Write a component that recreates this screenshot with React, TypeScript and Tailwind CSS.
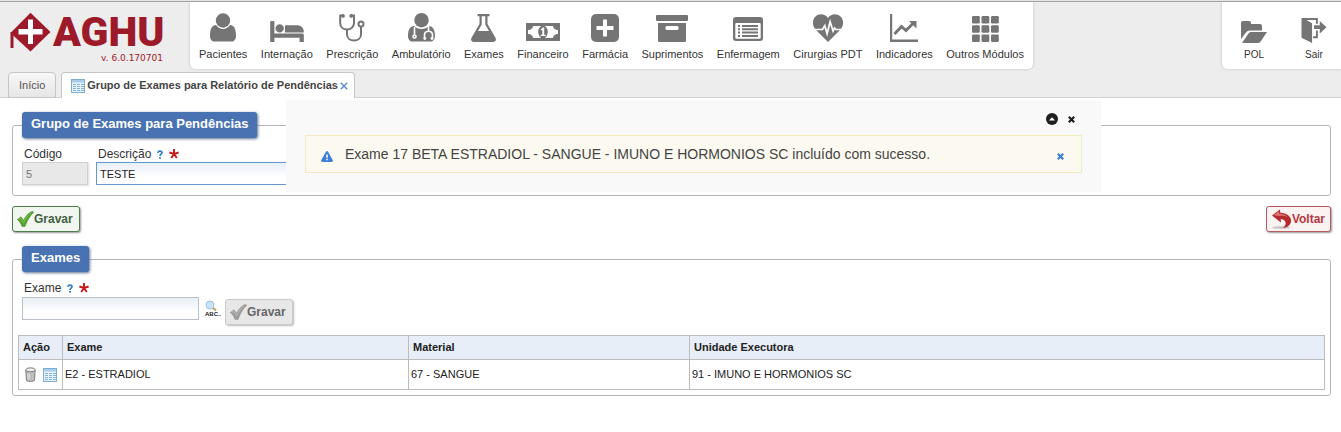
import type { ReactNode } from "react";

const G = "#757575";

function Svg({ w, h, box, children }: { w: number; h: number; box: string; children: ReactNode }) {
  return (
    <svg width={w} height={h} viewBox={box} fill={G} aria-hidden="true">
      {children}
    </svg>
  );
}

const UserIcon = () => (
  <Svg w={26} h={29} box="0 0 26 29">
    <circle cx="13" cy="7.5" r="7.2" />
    <path d="M6 12c2 2.700 4.500 3.900 7 3.900s5-1.200 7-3.900c4.700.2 6 5 6 11 0 3.500-2 5.500-4.500 5.500h-17C2 28.500 0 26.500 0 23c0-6 1.300-10.800 6-11z" />
  </Svg>
);
const BedIcon = () => (
  <Svg w={34} h={21} box="0 256 2048 1280">
    <path d="M256 1024h1728q26 0 45 19t19 45v448h-256v-256h-1536v256h-256v-1216q0-26 19-45t45-19h128q26 0 45 19t19 45v704zm576-320q0-106-75-181t-181-75-181 75-75 181 75 181 181 75 181-75 75-181zm1216 256v-64q0-159-112.5-271.5t-271.5-112.5h-704q-26 0-45 19t-19 45v384h1152z" />
  </Svg>
);
const StethoscopeIcon = () => (
  <Svg w={26} h={28} box="0 0 26 28">
    <g fill="none" stroke={G} strokeWidth="2" strokeLinecap="round">
      <path d="M4 1.500H1.200V9c0 4 3 6.500 6.800 6.500S15 13 15 9V1.500h-3M8 16v4.500c0 8 14 8 14 0V13" />
      <circle cx="22" cy="10" r="2.500" />
    </g>
    <circle cx="4" cy="1.900" r="1.900" />
    <circle cx="12.200" cy="1.900" r="1.900" />
  </Svg>
);
const DoctorIcon = () => (
  <Svg w={27} h={29} box="0 0 27 29">
    <circle cx="13.500" cy="7.200" r="7.200" />
    <path d="M6 13c4 4 11 4 15 0 4.500.5 6 5 6 10 0 3.500-2 5.500-4.500 5.500h-18C2 28.500 0 26.500 0 23c0-5 1.500-9.500 6-10z" />
    <g fill="none" stroke="#fff" strokeWidth="1.600">
      <path d="M6.500 14v7.500M16.500 26v-4c0-5 8-5 8 0v4M20.500 18v-5" />
      <circle cx="6.500" cy="23.500" r="1.500" />
    </g>
    <circle cx="16.800" cy="25.500" r="1.400" fill="#fff" />
    <circle cx="24" cy="25.500" r="1.400" fill="#fff" />
  </Svg>
);
const FlaskIcon = () => (
  <Svg w={25} h={28} box="0 0 25 28">
    <path fillRule="evenodd" d="M6.500 0h12v2.200h-2V10l7.800 13.500c1.500 2.500.2 4.500-2.300 4.500H3C.5 28-.8 26 .7 23.500L8.500 10V2.200h-2zM10.700 2.200v8.400L7 17h11l-3.700-6.400V2.200z" />
  </Svg>
);
const MoneyIcon = () => (
  <Svg w={34} h={19} box="0 0 34 19">
    <path d="M0 0h34v18H0z" />
    <path fill="#fff" d="M7 3h20c0 2 2 4 5 4v4c-3 0-5 2-5 4H7c0-2-2-4-5-4V7c3 0 5-2 5-4z" />
    <ellipse cx="17" cy="9" rx="4.800" ry="6.500" />
    <path fill="#fff" d="M14.700 6.500 17 4.500h1.200v7.300h1.500V13h-5v-1.200h1.600V6.700l-.8.700z" />
  </Svg>
);
const PlusIcon = () => (
  <Svg w={28} h={28} box="0 0 28 28">
    <rect width="28" height="28" rx="5" />
    <path fill="#fff" d="M12 5.500h4V12h6.500v4H16v6.500h-4V16H5.500v-4H12z" />
  </Svg>
);
const ArchiveIcon = () => (
  <Svg w={32} h={27} box="0 0 32 27">
    <rect width="32" height="6" rx="1" />
    <path d="M2 8h28v17.500c0 1-.5 1.500-1.500 1.500h-25C2.500 27 2 26.500 2 25.500z" />
    <rect x="9.500" y="11" width="13" height="4" rx="1.500" fill="#fff" />
  </Svg>
);
const ListIcon = () => (
  <Svg w={30} h={25} box="0 0 30 25">
    <rect width="30" height="24" rx="3" />
    <rect x="2.300" y="6" width="25.400" height="15.700" rx="1" fill="#fff" />
    <path d="M5 8h2v2H5zm4 0h16v2H9zM5 11.300h2v2H5zm4 0h16v2H9zM5 14.600h2v2H5zm4 0h16v2H9zM5 17.900h2v2H5zm4 0h16v2H9z" />
  </Svg>
);
const HeartIcon = () => (
  <Svg w={30} h={28} box="0 0 30 28">
    <path d="M15 28 2.500 15.500C-1 11.500-.8 5.500 2.500 2.500 6-.8 12-.5 15 4c3-4.500 9-4.800 12.500-1.500 3.300 3 3.500 9 0 13z" />
    <path d="M1 15.500h8.500l2.300-3.800 2.300 8 3-12 3 9.500 1.400-3.200 1.300 1.500H29" fill="none" stroke="#fff" strokeWidth="1.700" />
  </Svg>
);
const ChartIcon = () => (
  <Svg w={28} h={28} box="0 0 28 28">
    <path d="M0 0h2.200v25.600H28V28H0z" />
    <path d="m4.500 20 7-7.500 4.500 4L23 9.500" fill="none" stroke={G} strokeWidth="3" />
    <path d="M19 7h7.500v7.500z" />
  </Svg>
);
const GridIcon = () => (
  <Svg w={27} h={26} box="0 0 27 26">
    {[0, 9.500, 19].map((x) =>
      [0, 9.200, 18.400].map((y) => <rect key={`${x}-${y}`} x={x} y={y} width="7.800" height="7.500" rx="1.200" />),
    )}
  </Svg>
);
const FolderIcon = () => (
  <Svg w={26} h={22} box="0 0 26 22">
    <path d="M0 18V2C0 .7.7 0 2 0h6c1.300 0 2 .7 2 2v1h9c1.300 0 2 .7 2 2v4.500H9c-1.700 0-3 .7-4 2z" />
    <path d="M1 22 7.500 12.500c.7-1 1.500-1.500 2.800-1.500H26l-6 9c-.8 1.300-1.800 2-3 2z" />
  </Svg>
);
const ExitIcon = () => (
  <Svg w={26} h={25} box="0 0 26 26">
    <path d="M0 0h17v6h-2V2H5l6 3.500V26L0 20.500z" />
    <path d="M13 7.500h6V3l7 6.500L19 16v-4.500h-6zM15 13h2v8h-5v-2h3z" />
  </Svg>
);

const modules: { name: string; icon: ReactNode }[] = [
  { name: "Pacientes", icon: <UserIcon /> },
  { name: "Internação", icon: <BedIcon /> },
  { name: "Prescrição", icon: <StethoscopeIcon /> },
  { name: "Ambulatório", icon: <DoctorIcon /> },
  { name: "Exames", icon: <FlaskIcon /> },
  { name: "Financeiro", icon: <MoneyIcon /> },
  { name: "Farmácia", icon: <PlusIcon /> },
  { name: "Suprimentos", icon: <ArchiveIcon /> },
  { name: "Enfermagem", icon: <ListIcon /> },
  { name: "Cirurgias PDT", icon: <HeartIcon /> },
  { name: "Indicadores", icon: <ChartIcon /> },
  { name: "Outros Módulos", icon: <GridIcon /> },
];

function SheetIcon() {
  return (
    <svg width="14" height="14" viewBox="0 0 14 14" aria-hidden="true">
      <rect x=".5" y=".5" width="13" height="13" fill="#e6f3fc" stroke="#7fadd0" />
      <path d="M1 1h12v2.500H1z" fill="#a5cdec" />
      <path d="M2 5.500h3M6 5.500h3M10 5.500h3M2 7.500h3M6 7.500h3M10 7.500h3M2 9.500h3M6 9.500h3M10 9.500h3M2 11.500h3M6 11.500h3M10 11.500h3" stroke="#86b4d6" />
    </svg>
  );
}

function CheckIcon({ muted = false }: { muted?: boolean }) {
  return (
    <svg width="17" height="16" viewBox="0 0 17 16" aria-hidden="true">
      <path
        d="M.3 8.500 4 5.800l2.500 3.500C8.800 5 11.800 1.500 15.500.3l1.200.9C12.800 5 10 10 8 15.500H5C4 12.500 2.500 10.300.3 8.500z"
        fill={muted ? "#9c9c9c" : "#55a22f"}
        stroke={muted ? "#8c8c8c" : "#3f8428"}
        strokeWidth=".5"
      />
      <path d="m2 8.300 1.500-1 3 4.200C9 7 11 4 14 2" fill="none" stroke={muted ? "#bcbcbc" : "#86c554"} strokeWidth="1" />
    </svg>
  );
}

function Marks() {
  return (
    <>
      <svg width="6" height="9" viewBox="0 0 6 9" aria-hidden="true">
        <path d="M.8 2.800C1 .6 5 .5 5 2.700 5 4.200 3 4.200 3 6" fill="none" stroke="#2f7fc4" strokeWidth="1.700" />
        <path d="M2.100 7h1.800v1.800H2.100z" fill="#2f7fc4" />
      </svg>
      <svg width="10" height="10" viewBox="0 0 10 10" aria-hidden="true">
        <path d="M5 0v5L.4 3.500M5 5 2.200 9M5 5l2.800 4M5 5l4.600-1.500" fill="none" stroke="#c51b1b" strokeWidth="1.900" />
      </svg>
    </>
  );
}

function Cross({ className }: { className: string }) {
  return (
    <svg width="7" height="7" viewBox="0 0 7 7" className={className} aria-hidden="true">
      <path d="m.8.800 5.400 5.400M6.200.8.800 6.200" stroke="currentColor" strokeWidth="2.200" />
    </svg>
  );
}

function Legend({ children }: { children: ReactNode }) {
  return (
    <legend className="ml-[4px] flex h-[26px] items-center rounded-[3px] bg-[#4872b2] px-[9px] pb-[2px] text-[13px] font-bold text-white shadow-[1px_1px_3px_#5d718f]">
      {children}
    </legend>
  );
}

const columns = ["Ação", "Exame", "Material", "Unidade Executora"];

function ModuleLink({ name, icon }: { name: string; icon: ReactNode }) {
  return (
    <a href="#" className="flex flex-col items-center gap-1">
      <span className="flex h-[29px] items-end">{icon}</span>
      <span className="leading-4 whitespace-nowrap">{name}</span>
    </a>
  );
}

export default function App() {
  return (
    <div className="relative bg-white font-['Liberation_Sans',Arial,sans-serif] text-[#333]">
      <header className="border-b border-[#d2d2d2] bg-[#ededed]">
        <div className="h-[2px] border-b border-[#a3a3a3] bg-[#e4e4e4]" />
        <div className="flex items-start">
          <div className="flex w-[190px] shrink-0 flex-col pt-[10px] pl-[10px]">
            <div className="flex items-center gap-[2px] text-[#9d1a2b]">
              <svg width="41" height="40" viewBox="0 0 41 40" className="shrink-0" aria-hidden="true">
                <path d="M20.500.8 40.500 20l-20 19.500L.5 21z" fill="#9d1a2b" />
                <path d="M2 20v16" stroke="#9d1a2b" strokeWidth="3" />
                <path d="M18 7.500h5V17h9.500v5.500H23V32h-5v-9.500H8.500V17H18z" fill="#fff" />
              </svg>
              <span className="font-['Roboto',sans-serif] text-[41px] leading-10 font-black">AGHU</span>
            </div>
            <span className="self-end pr-[27px] font-['DejaVu_Sans',sans-serif] text-[9px] leading-3 text-[#9d1a2b]">v. 6.0.170701</span>
          </div>
          <nav className="flex h-[67px] w-[843px] justify-between rounded-b-[5px] bg-white px-[9px] pt-[11px] text-[11px] shadow-[0_0_3px_#bdbdbd] [clip-path:inset(0_-4px_-4px_-4px)]">
            {modules.map((m) => (
              <ModuleLink key={m.name} name={m.name} icon={m.icon} />
            ))}
          </nav>
          <nav className="ml-auto flex h-[67px] gap-[34px] rounded-bl-[5px] bg-white pt-[12px] pr-[14px] pl-[19px] text-[10px] shadow-[0_0_3px_#bdbdbd] [clip-path:inset(0_0_-4px_-4px)]">
            <ModuleLink name="POL" icon={<FolderIcon />} />
            <ModuleLink name="Sair" icon={<ExitIcon />} />
          </nav>
        </div>
        <div className="-mb-px flex h-[29px] items-end gap-[5px] pl-[8px]">
          <a href="#" className="flex h-[26px] items-center rounded-t-[4px] border border-[#c6c6c6] bg-linear-to-b from-[#f8f8f8] to-[#e6e6e6] px-[10px] text-[11px] text-[#555]">
            Início
          </a>
          <div className="flex h-[26px] items-center rounded-t-[4px] border border-b-0 border-[#c6c6c6] bg-white pr-[6px] pl-[9px] text-[11px] font-bold text-[#444]">
            <SheetIcon />
            <a href="#" className="ml-[2px]">Grupo de Exames para Relatório de Pendências</a>
            <button type="button" aria-label="Fechar aba" className="ml-[2px]">
              <svg width="8" height="8" viewBox="0 0 8 8" aria-hidden="true">
                <path d="m.8.800 6.400 6.400M7.200.8.800 7.200" stroke="#5e8fc9" strokeWidth="1.500" />
              </svg>
            </button>
          </div>
        </div>
      </header>

      <main className="px-[10px] pt-[14px] pl-[12px]">
        <fieldset className="rounded-[3px] border border-[#b4b7ba] px-[5px] pb-[10px]">
          <Legend>Grupo de Exames para Pendências</Legend>
          <div className="flex gap-[8px] pt-2 pl-[4px]">
            <div className="flex w-[66px] flex-col">
              <label htmlFor="codigo" className="pl-[2px] text-[12px] leading-4">Código</label>
              <input id="codigo" disabled defaultValue="5" className="h-[23px] border border-[#d0d0d0] bg-[#e8e8e8] px-[3px] text-[11px] text-[#777] shadow-[1px_1px_2px_#ddd]" />
            </div>
            <div className="flex w-[420px] flex-col">
              <div className="flex items-center gap-[6px] pl-[2px]">
                <label htmlFor="descricao" className="text-[12px] leading-4">Descrição</label>
                <Marks />
              </div>
              <input id="descricao" defaultValue="TESTE" className="h-[23px] border border-[#6795cd] bg-linear-to-b from-[#e9eff7] to-white to-70% px-[3px] text-[11px] text-[#222]" />
            </div>
          </div>
        </fieldset>

        <div className="flex justify-between pt-[10px]">
          <button type="button" className="flex h-[26px] items-center rounded-[3px] border border-[#4d7c49] bg-[#f1f6f0] pr-[6px] pl-[4px] text-[12px] font-bold text-[#41603f] shadow-[1px_1px_2px_#999]">
            <CheckIcon />
            Gravar
          </button>
          <button type="button" className="flex h-[26px] items-center rounded-[3px] border border-[#b85a60] bg-[#fbf2f2] pr-[5px] pl-[4px] text-[12px] font-bold text-[#b5383e] shadow-[1px_1px_2px_#999]">
            <svg width="21" height="20" viewBox="0 0 21 20" aria-hidden="true">
              <ellipse cx="10" cy="18.500" rx="9" ry="1.300" fill="#c9c4c4" />
              <path d="M1 6.500 9 .5l.3 3.300c8 .2 12.500 5.500 10.200 10.700-1.300 2.700-4.500 4.300-8 4.500 4.500-2.700 4.500-8.500-1.800-9l.3 3.500z" fill="#b52a2c" />
              <path d="m2.500 6.300 5.500-4 .3 2.500c4 0 7 1.200 8.700 3.500-2.500-1.300-5-1.600-8.500-1.400z" fill="#de7471" />
            </svg>
            Voltar
          </button>
        </div>

        <fieldset className="mt-[14px] rounded-[3px] border border-[#b4b7ba] px-[5px] pb-[5px]">
          <Legend>Exames</Legend>
          <div className="pt-2 pl-[4px]">
            <div className="flex items-center gap-[6px] pl-[2px]">
              <label htmlFor="exame" className="text-[12px] leading-4">Exame</label>
              <Marks />
            </div>
            <div className="flex items-start">
              <input id="exame" className="mt-px h-[23px] w-[177px] border border-[#b9bfc8] bg-linear-to-b from-[#e9eff7] to-white to-70% px-[3px] text-[11px]" />
              <button type="button" aria-label="Pesquisar exame" className="mt-1 ml-[6px]">
                <svg width="16" height="17" viewBox="0 0 16 17" aria-hidden="true">
                  <circle cx="5" cy="5" r="4" fill="#c9e3f7" stroke="#9fc3de" />
                  <path d="m8 8 3 2.500" stroke="#c79a5f" strokeWidth="2" />
                  <text x="0" y="16" fontSize="6" fontWeight="bold" fill="#222" fontFamily="Liberation Sans, sans-serif">ABC..</text>
                </svg>
              </button>
              <button type="button" disabled className="mt-[3px] ml-[4px] flex h-[26px] items-center rounded-[3px] border border-[#cbcbcb] bg-[#e7e7e7] pr-[6px] pl-[4px] text-[12px] font-bold text-[#666] shadow-[1px_1px_2px_#bbb]">
                <CheckIcon muted />
                Gravar
              </button>
            </div>
          </div>
          <table className="mt-[10px] w-full table-fixed border-collapse text-left text-[11px] text-[#222]">
            <colgroup>
              <col className="w-[44px]" />
              <col className="w-[346px]" />
              <col className="w-[281px]" />
              <col />
            </colgroup>
            <thead>
              <tr className="h-[24px] bg-[#e7eef7]">
                {columns.map((c) => (
                  <th key={c} scope="col" className="border border-[#bcbcbc] px-[4px] font-bold">{c}</th>
                ))}
              </tr>
            </thead>
            <tbody>
              <tr className="h-[30px]">
                <td className="border border-[#bcbcbc] pl-[6px]">
                  <div className="flex items-center gap-[7px]">
                    <button type="button" aria-label="Excluir">
                      <svg width="11" height="15" viewBox="0 0 11 15" aria-hidden="true">
                        <path d="M.8 3 1.500 13.500c1 1.200 7 1.200 8 0L10.200 3z" fill="#bdbdbd" stroke="#808080" />
                        <ellipse cx="5.500" cy="2.800" rx="4.800" ry="2" fill="#ececec" stroke="#808080" />
                        <path d="M3 6.500v6M4.200 6.500v6" stroke="#e4e4e4" strokeWidth=".9" />
                      </svg>
                    </button>
                    <button type="button" aria-label="Detalhes"><SheetIcon /></button>
                  </div>
                </td>
                <td className="border border-[#bcbcbc] px-[2px]">E2 - ESTRADIOL</td>
                <td className="border border-[#bcbcbc] px-[2px]">67 - SANGUE</td>
                <td className="border border-[#bcbcbc] px-[2px]">91 - IMUNO E HORMONIOS SC</td>
              </tr>
            </tbody>
          </table>
        </fieldset>
      </main>

      <section aria-label="Mensagens" className="absolute top-[100px] left-[286px] w-[815px] bg-[#f9f9f9] px-[19px] pt-[13px] pb-[19px]">
        <div className="flex items-center justify-end gap-[10px] pr-[7px]">
          <button type="button" aria-label="Recolher">
            <svg width="12" height="12" viewBox="0 0 12 12" aria-hidden="true">
              <circle cx="6" cy="6" r="6" fill="#1f1f1f" />
              <path d="M3 7.500h6L6 4.300z" fill="#fff" />
            </svg>
          </button>
          <button type="button" aria-label="Fechar"><Cross className="text-[#1f1f1f]" /></button>
        </div>
        <div role="alert" className="mt-[10px] flex h-[38px] items-center border border-[#f3ebc0] bg-[#fcfaf0] pr-[17px] pl-[15px] text-[14px] text-[#444]">
          <svg width="12" height="11" viewBox="0 0 12 11" className="mt-1 mr-[12px]" aria-hidden="true">
            <path d="M4.800 1c.6-1.200 1.800-1.200 2.400 0l4.500 8c.5 1.200 0 2-1 2H1.300c-1 0-1.500-.8-1-2z" fill="#3d7fda" />
            <path d="M5.200 3.500h1.600v3.300H5.200zm0 4.300h1.600v1.500H5.200z" fill="#fff" />
          </svg>
          <span className="flex-1">Exame 17 BETA ESTRADIOL - SANGUE - IMUNO E HORMONIOS SC incluído com sucesso.</span>
          <button type="button" aria-label="Fechar mensagem" className="mt-1"><Cross className="text-[#3d7fda]" /></button>
        </div>
      </section>
    </div>
  );
}
